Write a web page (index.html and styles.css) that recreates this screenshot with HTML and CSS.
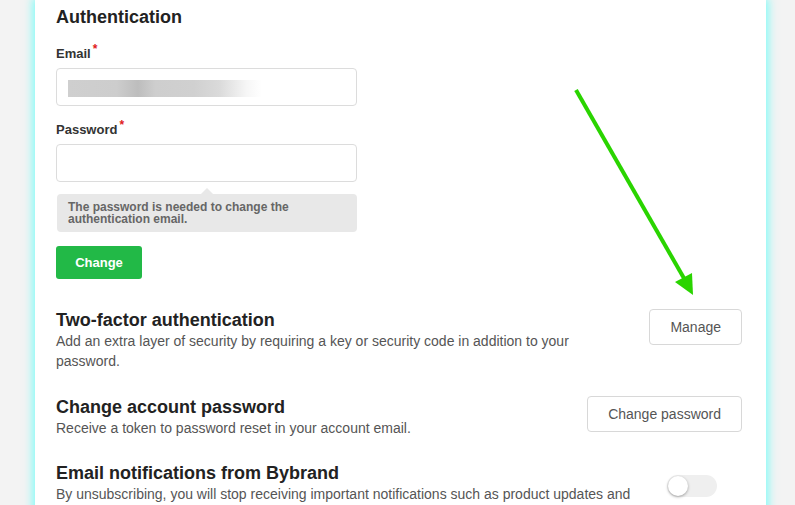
FILE: index.html
```html
<!DOCTYPE html>
<html>
<head>
<meta charset="utf-8">
<link rel="stylesheet" href="styles.css">
</head>
<body>
<div class="page">
  <div class="card">
    <h2 class="title">Authentication</h2>
    <div class="field">
      <label class="label">Email<span class="req">*</span></label>
      <div class="input"><span class="blur"></span></div>
    </div>
    <div class="field">
      <label class="label">Password<span class="req">*</span></label>
      <div class="input"></div>
      <div class="hint">The password is needed to change the authentication email.</div>
    </div>
    <button class="btn-green">Change</button>

    <div class="row first">
      <div class="info">
        <h3 class="row-title">Two-factor authentication</h3>
        <p class="row-desc">Add an extra layer of security by requiring a key or security code in addition to your password.</p>
      </div>
      <button class="btn">Manage</button>
    </div>
    <div class="row">
      <div class="info">
        <h3 class="row-title">Change account password</h3>
        <p class="row-desc">Receive a token to password reset in your account email.</p>
      </div>
      <button class="btn">Change password</button>
    </div>
    <div class="row last">
      <div class="info">
        <h3 class="row-title">Email notifications from Bybrand</h3>
        <p class="row-desc">By unsubscribing, you will stop receiving important notifications such as product updates and news.</p>
      </div>
      <div class="toggle"><span class="knob"></span></div>
    </div>

    <svg class="arrow" width="731" height="505" viewBox="0 0 731 505">
      <line x1="541" y1="90" x2="650" y2="280" stroke="#2ad400" stroke-width="4"/>
      <polygon points="640,282 657,273 658,295" fill="#2ad400"/>
    </svg>
  </div>
</div>
</body>
</html>
```

FILE: styles.css
```css
html, body {
  margin: 0;
  padding: 0;
  background: #f3f3f3;
  overflow: hidden;
  height: 505px;
}
.page {
  padding-left: 35px;
  font-family: "Liberation Sans", Arial, sans-serif;
}
.card {
  position: relative;
  width: 731px;
  box-sizing: border-box;
  background: #fff;
  padding: 6px 24px 40px 21px;
  min-height: 560px;
  box-shadow: 0 0 9px 2px rgba(80, 255, 250, 0.75);
}
.title {
  margin: 0;
  font-size: 18px;
  line-height: 22px;
  font-weight: bold;
  color: #222;
}
.field {
  margin-top: 18px;
}
.field + .field {
  margin-top: 16px;
}
.label {
  display: block;
  font-size: 13px;
  line-height: 16px;
  font-weight: bold;
  color: #333;
  margin-bottom: 6px;
}
.req {
  color: #e02020;
  font-size: 12px;
  position: relative;
  top: -5px;
  margin-left: 2px;
}
.input {
  width: 301px;
  height: 38px;
  box-sizing: border-box;
  border: 1px solid #dcdcdc;
  border-radius: 4px;
  background: #fff;
  padding: 11px 0 0 11px;
}
.blur {
  display: block;
  width: 194px;
  height: 17px;
  background: linear-gradient(90deg, #cfcfcf 0%, #cdcdcd 25%, #bdbdbd 36%, #cecece 45%, #d0d0d0 65%, #dadada 78%, #f6f6f6 92%, #ffffff 100%);
}
.hint {
  position: relative;
  width: 300px;
  box-sizing: border-box;
  margin: 12px 0 0 1px;
  padding: 7px 11px;
  background: #e8e8e8;
  border-radius: 4px;
  font-size: 12px;
  line-height: 12px;
  font-weight: bold;
  color: #666;
}
.hint::before {
  content: "";
  position: absolute;
  left: 144px;
  top: -6px;
  border-left: 6px solid transparent;
  border-right: 6px solid transparent;
  border-bottom: 6px solid #e8e8e8;
}
.btn-green {
  display: block;
  margin-top: 14px;
  width: 86px;
  height: 33px;
  border: none;
  border-radius: 3px;
  background: #22b947;
  color: #fff;
  font-family: "Liberation Sans", Arial, sans-serif;
  font-size: 13px;
  font-weight: bold;
  padding: 0;
}
.row {
  display: flex;
  justify-content: space-between;
  align-items: flex-start;
  margin-top: 25px;
}
.row.first {
  margin-top: 30px;
}
.row.last {
  margin-top: 24px;
}
.info {
  width: 530px;
}
.row-title {
  margin: 0;
  font-size: 18px;
  line-height: 22px;
  font-weight: bold;
  color: #222;
}
.row-desc {
  margin: 0;
  font-size: 14px;
  line-height: 20px;
  color: #555;
  width: 580px;
}
.btn {
  height: 36px;
  padding: 0 20px;
  border: 1px solid #d8d8d8;
  border-radius: 4px;
  background: #fff;
  color: #555;
  font-family: "Liberation Sans", Arial, sans-serif;
  font-size: 14px;
  flex: none;
}
.toggle {
  position: relative;
  flex: none;
  width: 50px;
  height: 22px;
  border-radius: 11px;
  background: #efefef;
  margin-top: 13px;
  margin-right: 25px;
}
.knob {
  position: absolute;
  left: 1px;
  top: 1px;
  width: 20px;
  height: 20px;
  border-radius: 50%;
  background: #fff;
  box-shadow: 0 1px 3px rgba(0, 0, 0, 0.35);
}
.arrow {
  position: absolute;
  left: 0;
  top: 0;
  pointer-events: none;
}
```
